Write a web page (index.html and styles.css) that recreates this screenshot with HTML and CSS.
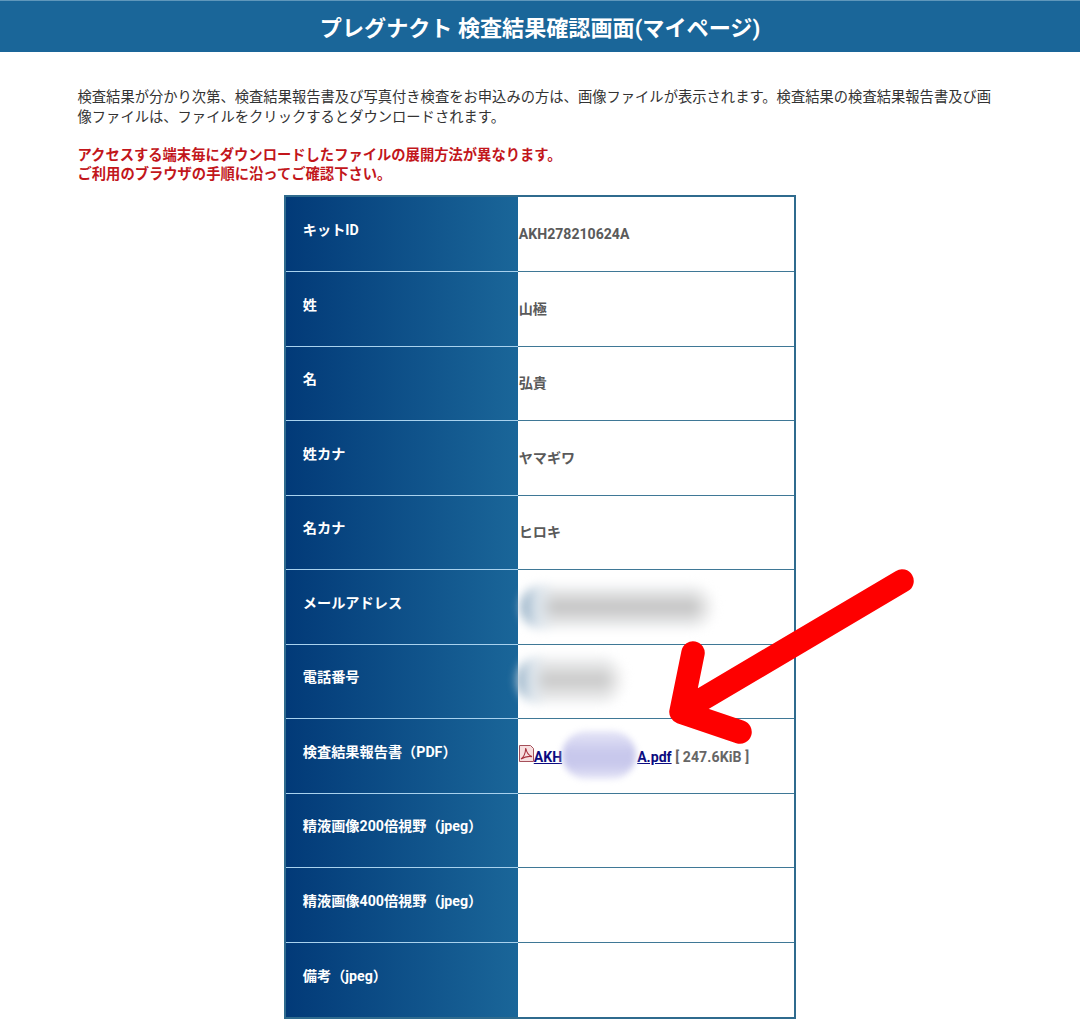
FILE: index.html
```html
<!DOCTYPE html>
<html lang="ja">
<head>
<meta charset="utf-8">
<title>プレグナクト 検査結果確認画面(マイページ)</title>
<link rel="stylesheet" href="styles.css">
</head>
<body>
<h1 class="title">プレグナクト 検査結果確認画面(マイページ)</h1>
<main class="content">
  <p class="intro">検査結果が分かり次第、検査結果報告書及び写真付き検査をお申込みの方は、画像ファイルが表示されます。検査結果の検査結果報告書及び画像ファイルは、ファイルをクリックするとダウンロードされます。</p>
  <p class="notice">アクセスする端末毎にダウンロードしたファイルの展開方法が異なります。<br>ご利用のブラウザの手順に沿ってご確認下さい。</p>
  <table class="result">
    <tr><th>キットID</th><td>AKH278210624A</td></tr>
    <tr><th>姓</th><td>山極</td></tr>
    <tr><th>名</th><td>弘貴</td></tr>
    <tr><th>姓カナ</th><td>ヤマギワ</td></tr>
    <tr><th>名カナ</th><td>ヒロキ</td></tr>
    <tr><th>メールアドレス</th><td class="masked"><span class="blur blur-mail"></span></td></tr>
    <tr><th>電話番号</th><td class="masked"><span class="blur blur-tel"></span></td></tr>
    <tr><th>検査結果報告書（PDF）</th><td class="file">
      <svg class="pdf" viewBox="0 0 15 17" aria-hidden="true"><path d="M.5.5h11l3 3v13H.5z" fill="#f7dfe0" stroke="#a5505a"/><path d="M2 14c2.700-1.800 4.400-5.500 4.800-11 .6 4 2.700 7.500 6.200 8.600-4-.7-7.200 0-11 2.400z" fill="none" stroke="#a8323e" stroke-width="1.100"/></svg><a href="#">AKH<span class="gap"></span>A.pdf</a> <span class="size">[ 247.6KiB ]</span><span class="blur blur-file"></span></td></tr>
    <tr><th>精液画像200倍視野（jpeg）</th><td></td></tr>
    <tr><th>精液画像400倍視野（jpeg）</th><td></td></tr>
    <tr><th>備考（jpeg）</th><td></td></tr>
  </table>
</main>
<svg class="arrow" viewBox="0 0 1080 1028" aria-hidden="true">
  <path d="M902 581 L684 710 M693 653 L681 712 L740 732" fill="none" stroke="#fe0000" stroke-width="23.500" stroke-linecap="round" stroke-linejoin="round"/>
</svg>
</body>
</html>
```
FILE: styles.css
```css
* { box-sizing: border-box; }
html, body { margin: 0; padding: 0; background: #fff; }
body {
  position: relative;
  height: 1028px;
  overflow: hidden;
  font-family: Roboto, "Noto Sans CJK JP", sans-serif;
  color: #333;
}
.title {
  margin: 0;
  height: 52px;
  line-height: 54px;
  background: #1a6699;
  border-top: 1px solid #5f97bb;
  color: #fff;
  font-size: 22.100px;
  font-weight: 700;
  text-align: center;
}
.content { padding: 35px 78px 0 77.500px; }
.intro {
  margin: 0 0 19px;
  font-size: 14.300px;
  line-height: 20px;
  color: #333;
}
.notice {
  margin: 0 0 11px;
  font-size: 14.300px;
  line-height: 19px;
  font-weight: 700;
  color: #c2161b;
}
.result {
  width: 512px;
  margin: 0 auto;
  border-collapse: separate;
  border-spacing: 0;
  border: 2px solid #2f6b8e;
  table-layout: fixed;
}
.result tr { height: 74.500px; }
.result tr:first-child { height: 75px; }
.result th {
  width: 232px;
  padding: 0 0 10px 17px;
  text-align: left;
  font-size: 14.200px;
  font-weight: 700;
  color: #fff;
  background: linear-gradient(90deg, #023a78, #1a6699);
  border-bottom: 1px solid #a9d2ee;
}
.result td {
  position: relative;
  padding: 0 0 2px 1px;
  font-size: 14.100px;
  font-weight: 700;
  color: #5a5a5a;
  background: #fff;
  border-bottom: 1px solid #3f7896;
}
.result tr:first-child td { padding-bottom: 0; }
.result td.file { padding: 0 0 1px 1px; }
.result tr:last-child th, .result tr:last-child td { border-bottom: 0; }
.file a { color: #0b0b80; text-decoration: underline; }
.gap { display: inline-block; width: 75px; }
.size { color: #666; letter-spacing: .1px; }
.pdf {
  width: 15px;
  height: 17px;
  margin-right: 0;
  vertical-align: 0;
}
.blur {
  position: absolute;
  display: block;
  pointer-events: none;
}
.blur-mail {
  left: 2px;
  top: 14px;
  width: 196px;
  height: 46px;
  border-radius: 23px;
  filter: blur(5px);
  background:
    linear-gradient(90deg, transparent 88%, #fff 100%),
    linear-gradient(90deg, #8fabc2 0, #dfe7ee 9%, transparent 18%),
    linear-gradient(180deg, #f8f9fa 0, #c2c2c2 50%, #f8f9fa 100%);
}
.blur-tel {
  left: -2px;
  top: 10px;
  width: 110px;
  height: 50px;
  border-radius: 25px;
  filter: blur(5px);
  background:
    linear-gradient(90deg, transparent 80%, #fff 100%),
    linear-gradient(90deg, #8aa8c0 0, #dfe7ee 14%, transparent 28%),
    linear-gradient(180deg, #f8f9fa 0, #c8c8c8 50%, #f8f9fa 100%);
}
.blur-file {
  left: 44px;
  top: 12px;
  width: 74px;
  height: 48px;
  border-radius: 24px;
  background: linear-gradient(180deg, #e6e6f7 0, #c8c8ec 45%, #c8c8ec 70%, #e6e6f7 100%);
  filter: blur(3px);
}
.arrow {
  position: absolute;
  left: 0;
  top: 0;
  width: 1080px;
  height: 1028px;
  pointer-events: none;
}
```
